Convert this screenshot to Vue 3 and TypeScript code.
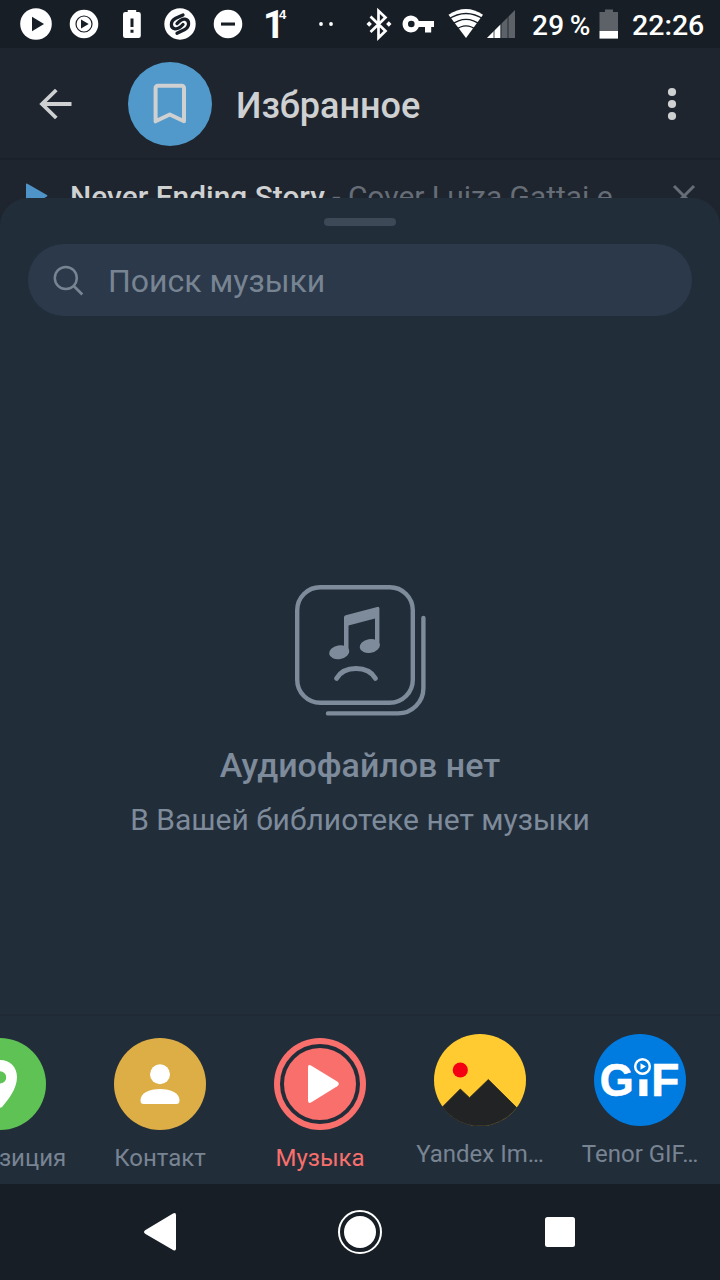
<script setup lang="ts">
interface AttachItem {
  id: string
  label: string
  color: string
  active?: boolean
  bot?: boolean
}

const attachments: AttachItem[] = [
  { id: 'location', label: 'Геопозиция', color: '#5fc255' },
  { id: 'contact', label: 'Контакт', color: '#ddae46' },
  { id: 'music', label: 'Музыка', color: '#f86f6c', active: true },
  { id: 'images', label: 'Yandex Im…', color: '#ffcb30', bot: true },
  { id: 'gif', label: 'Tenor GIF…', color: '#007be0', bot: true },
]
</script>

<template>
  <div class="screen">
    <header class="status">
      <div class="notifications">
        <svg viewBox="12 0 48 48"><circle cx="36" cy="24" r="15.8" fill="#fff" /><path d="M32 16.8 44 24 32 31.2Z" fill="#171e26" /></svg>
        <svg viewBox="60 0 48 48"><circle cx="84" cy="24" r="14.3" fill="#fff" /><circle cx="84" cy="24" r="8" fill="none" stroke="#171e26" stroke-width="1.2" /><path d="M81 19.6 88.7 24 81 28.4Z" fill="#171e26" /></svg>
        <svg viewBox="108 0 48 48"><path d="M125.200 12h2.500v-2h8.500v2h2.300q2.300 0 2.300 2.300v21.500q0 2.300-2.300 2.300h-13.200q-2.300 0-2.300-2.300V14.300q0-2.300 2.200-2.300Z" fill="#fff" /><path d="M130.500 18.500h3v8.500h-3ZM130.500 29.800h3v3h-3Z" fill="#171e26" /></svg>
        <svg viewBox="156 0 48 48"><circle cx="180" cy="24" r="15.7" fill="#fff" /><path d="M183 15 175.700 18.300C169.800 21.400 170.300 28 175 28.800C178 29.300 180.700 27 183 24.500M177 33.200 184.300 29.800C190.200 26.600 189.600 20.200 185 19.200C182 18.600 179.300 21.200 177 23.600" fill="none" stroke="#171e26" stroke-width="3.300" stroke-linecap="round" /></svg>
        <svg viewBox="204 0 48 48"><circle cx="228" cy="24" r="14.3" fill="#fff" /><path d="M221 22.500h14v3.100h-14Z" fill="#171e26" /></svg>
        <svg viewBox="252 0 48 48" fill="#fff"><text class="tasks" x="263" y="37.800">1</text><text class="count" x="279" y="18.500">4</text></svg>
        <svg viewBox="300 0 48 48"><circle cx="321" cy="24" r="1.900" fill="#fff" /><circle cx="331" cy="24" r="1.900" fill="#fff" /></svg>
      </div>
      <div class="system">
        <svg width="36" height="48" viewBox="362 0 36 48"><path d="m370.500 16.500 15 14.500-7 6.800V10.800l7 6.700-15 14.500" fill="none" stroke="#fff" stroke-width="2.700" /><path d="m369.200 21.200 2.700 2.800-2.700 2.800-2.700-2.800ZM388.800 21.200l2.700 2.800-2.700 2.800-2.700-2.800Z" fill="#fff" /></svg>
        <svg width="42" height="48" viewBox="398 0 42 48"><path fill-rule="evenodd" d="M418.800 21H434v6h-2.800v5.500H425V27h-6.200a8.400 8.400 0 1 1 0-6ZM411.300 20.700a3.300 3.300 0 1 0 0 6.600 3.300 3.300 0 0 0 0-6.600Z" fill="#fff" /></svg>
        <svg width="45" height="48" viewBox="440 0 45 48"><path d="M448.500 14.700Q466 3.500 483 14.700L466 38Z" fill="#fff" /><path d="M448 19.500Q466 7.500 484 19.500M451 25.200Q466 13.600 481 25.200M455 30.300Q466 21.400 477 30.300" fill="none" stroke="#171e26" stroke-width="1.300" /></svg>
        <svg width="35" height="48" viewBox="485 0 35 48"><path d="M487 38 515 10V38Z" fill="#5d6269" /><path d="M487 38 500.500 24.500V38Z" fill="#fff" /><path d="M494 26v12M501 20v18M508 13v25" stroke="#171e26" stroke-width=".8" /></svg>
        <span class="percent">29 %</span>
        <svg class="battery" width="20" height="48" viewBox="599 0 20 48"><path d="M599.500 12h5.500v-2.500h8V12h5v19h-18.500Z" fill="#5d6269" /><path d="M599.500 31H618v7.600h-18.500Z" fill="#fff" /></svg>
        <span class="clock">22:26</span>
      </div>
    </header>

    <div class="toolbar">
      <svg class="back" width="36" height="36" viewBox="38 86 36 36"><path d="M71.500 104H42M56.300 90 42 104l14.300 14" fill="none" stroke="#cfd0d1" stroke-width="3.800" /></svg>
      <div class="avatar">
        <svg width="84" height="84" viewBox="128 62 84 84"><path d="M157.800 85.800h24a2.200 2.200 0 0 1 2.200 2.200v33.300l-14.200-6.800-14.200 6.800V88a2.200 2.200 0 0 1 2.200-2.200Z" fill="none" stroke="#cfd0d1" stroke-width="4" stroke-linejoin="round" /></svg>
      </div>
      <h1>Избранное</h1>
      <svg class="more" width="16" height="40" viewBox="664 84 16 40"><g fill="#cfd0d0"><circle cx="672" cy="92" r="4.100" /><circle cx="672" cy="104" r="4.100" /><circle cx="672" cy="116" r="4.100" /></g></svg>
    </div>

    <div class="player">
      <svg width="24" height="32" viewBox="25 182 24 32"><path d="M26 184.500q0-1.500 1.400-.8l19.500 11.200q1.300.8 0 1.600l-19.500 11.200q-1.400.8-1.400-.8Z" fill="#4f94c8" /></svg>
      <p class="track"><b>Never Ending Story</b> - Cover Luiza Gattai e</p>
      <svg class="close" width="24" height="24" viewBox="672 184 24 24"><path d="m674 186 20 20M694 186l-20 20" stroke="#666d76" stroke-width="3" /></svg>
    </div>

    <main class="sheet">
      <div class="handle"></div>
      <div class="search">
        <svg width="32" height="32" viewBox="52 264 32 32"><circle cx="65.800" cy="278" r="11" fill="none" stroke="#788492" stroke-width="2.500" /><path d="m73.500 285.700 8.800 8.800" stroke="#788492" stroke-width="2.700" /></svg>
        <span>Поиск музыки</span>
      </div>
      <section class="empty">
        <svg width="136" height="136" viewBox="292 582 136 136">
          <g fill="none" stroke="#7e8b9a" stroke-width="4.400" stroke-linecap="round">
            <rect x="297.200" y="587.200" width="115.600" height="115.600" rx="23" />
            <path d="M423.400 618v70a25.400 25.400 0 0 1-25.400 25.400H328" />
            <path d="M336.500 678.500c4-7 11.500-10 19.500-10s15.500 3 19.500 10" stroke-width="4.800" />
          </g>
          <g fill="#7e8b9a">
            <ellipse cx="339.200" cy="652.300" rx="10.200" ry="6.900" transform="rotate(-10 339.200 652.300)" />
            <ellipse cx="369.800" cy="646" rx="10.200" ry="6.900" transform="rotate(-10 369.800 646)" />
            <path d="M344 617.500q0-1.700 1.700-2.200l31.500-8.400q2.200-.6 2.200 1.600V646H375v-27.500l-26.500 7V652H344Z" />
          </g>
        </svg>
        <h2>Аудиофайлов нет</h2>
        <p>В Вашей библиотеке нет музыки</p>
      </section>
      <nav class="attachments">
        <div v-for="item in attachments" :key="item.id" class="item" :class="{ bot: item.bot, active: item.active }">
          <svg width="92" height="92" viewBox="0 0 92 92">
            <circle cx="46" cy="46" r="46" :fill="item.color" />
            <path v-if="item.id === 'location'" fill-rule="evenodd" d="M46 22c-10 0-17 7-17 17 0 12 9 23 14.500 29.500q2.500 2.500 5 0C54 62 63 51 63 39c0-10-7-17-17-17Zm0 11.200a6.200 6.200 0 1 1 0 12.400 6.200 6.200 0 0 1 0-12.400Z" fill="#fff" />
            <g v-else-if="item.id === 'contact'" fill="#fff">
              <circle cx="46" cy="36.300" r="10" />
              <path d="M26.500 62.500C26.500 55 35 51 46 51s19.500 4 19.500 11.500c0 2.500-1 3.500-3.200 3.500H29.700c-2.200 0-3.200-1-3.200-3.500Z" />
            </g>
            <template v-else-if="item.id === 'music'">
              <circle cx="46" cy="46" r="38" fill="none" stroke="#222d3a" stroke-width="4" />
              <path d="M34 29.500q0-3.700 3.400-1.700L63.200 43.600q3.400 2.300 0 4.700L37.400 64.200q-3.400 2-3.400-1.700Z" fill="#fff" />
            </template>
            <template v-else-if="item.id === 'images'">
              <path d="M8.600 72.800 26.300 55l9.200 8.700L54.300 45.500 82.600 73.500A46 46 0 0 1 8.600 72.800Z" fill="#222324" stroke="#222324" stroke-width=".8" />
              <circle cx="26.300" cy="36" r="7.600" fill="#f50012" />
            </template>
            <template v-else>
              <text class="gif" x="5.800" y="61.800" textLength="34" lengthAdjust="spacingAndGlyphs">G</text>
              <path d="M45.300 45.300h8.200v16.800h-8.200Z" fill="#fff" />
              <text class="gif" x="57.200" y="61.800">F</text>
              <circle cx="48.500" cy="32.500" r="7.300" fill="#007be0" stroke="#fff" stroke-width="2.500" />
              <path d="M46.500 29.200 52 32.500l-5.500 3.300Z" fill="#fff" />
            </template>
          </svg>
          <span>{{ item.label }}</span>
        </div>
      </nav>
    </main>

    <footer class="navigation">
      <svg viewBox="60 1184 200 96"><path d="M176 1215.300v33q0 3.400-3 1.700l-27.500-16q-3-2 0-4l27.500-16.400q3-1.700 3 1.700Z" fill="#fff" /></svg>
      <svg viewBox="260 1184 200 96"><circle cx="360" cy="1232" r="16" fill="#fff" /><circle cx="360" cy="1232" r="21" fill="none" stroke="#fff" stroke-width="2" /></svg>
      <svg viewBox="460 1184 200 96"><rect x="545" y="1217" width="30" height="30" rx="2.500" fill="#fff" /></svg>
    </footer>
  </div>
</template>

<style>
body { margin: 0; background: #171e26; }
</style>

<style scoped>
.screen {
  width: 720px;
  height: 1280px;
  display: flex;
  flex-direction: column;
  overflow: hidden;
  background: #1b222c;
  font-family: Roboto, "Noto Sans", sans-serif;
}
svg { display: block; flex: none; }
h1, h2, p { margin: 0; font-weight: 500; }
.status { height: 48px; flex: none; display: flex; justify-content: space-between; background: #171e26; color: #fff; }
.notifications { display: flex; margin-left: 12px; }
.notifications svg { width: 48px; height: 48px; }
.tasks { font: 700 38px Roboto, sans-serif; }
.count { font: 700 13px "Liberation Sans", sans-serif; }
.system { display: flex; width: 358px; line-height: 52px; font-weight: 500; white-space: nowrap; }
.percent { width: 67px; padding-left: 12px; font-size: 28px; letter-spacing: .3px; word-spacing: -2px; }
.clock { padding-left: 13px; font-size: 28.5px; }
.toolbar { height: 112px; flex: none; display: flex; align-items: center; background: #1e252f; border-bottom: 2px solid #1a212a; padding: 0 40px 0 38px; box-sizing: border-box; padding-top: 2px; }
.avatar { width: 84px; height: 84px; margin-left: 54px; border-radius: 50%; background: #5199cb; }
.toolbar h1 { margin-left: 24px; font-size: 36px; line-height: 44px; color: #cfd0d1; padding-top: 4px; }
.more { margin-left: auto; }
.player { height: 74px; box-sizing: border-box; padding: 2px 24px 0 25px; flex: none; display: flex; align-items: center; background: #1e252f; }
.close { margin-bottom: 4px; }
.track { flex: 1; margin-left: 21px; padding-bottom: 3px; color: #666d76; font-size: 29.900px; line-height: 36px; font-weight: 400; white-space: nowrap; }
.track b { font-weight: 500; color: #cfd0d1; }
.sheet { position: relative; height: 986px; flex: none; margin-top: -36px; display: flex; flex-direction: column; border-radius: 28px 28px 0 0; background: #222d3a; }
.handle { width: 72px; height: 8px; margin: 20px auto 18px; border-radius: 4px; background: #3e4957; flex: none; }
.search { height: 72px; margin: 0 28px; padding-left: 24px; border-radius: 36px; background: #2b394b; display: flex; align-items: center; gap: 24px; color: #788492; font-size: 32px; line-height: 40px; flex: none; }
.search span { padding-top: 2px; }
.empty { flex: 1; display: flex; flex-direction: column; align-items: center; padding-top: 266px; color: #7e8b9a; }
.empty h2 { margin-top: 26px; font-size: 34px; line-height: 42px; }
.empty p { margin-top: 16px; font-size: 30px; line-height: 36px; font-weight: 400; }
.attachments { height: 170px; box-sizing: border-box; border-top: 2px solid #1f2935; display: flex; margin-left: -80px; width: 800px; overflow: hidden; flex: none; }
.item { width: 160px; flex: none; display: flex; flex-direction: column; align-items: center; padding-top: 22px; color: #788492; font-size: 24px; white-space: nowrap; }
.item.bot { padding-top: 18px; }
.item.active { color: #f86f6c; }
.item span { margin-top: 14px; line-height: 28px; }
.gif { font: 700 46px "Liberation Sans", sans-serif; fill: #fff; stroke: #fff; stroke-width: .6px; }
.navigation { height: 96px; flex: none; display: flex; justify-content: center; background: #171e26; }
.navigation svg { width: 200px; height: 96px; }
</style>
